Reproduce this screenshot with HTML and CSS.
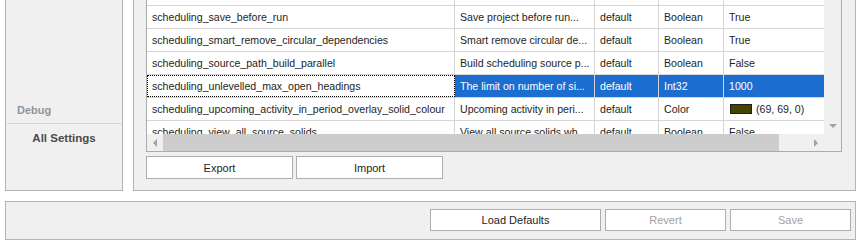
FILE: index.html
```html
<!DOCTYPE html>
<html>
<head>
<meta charset="utf-8">
<link rel="stylesheet" href="styles.css">
</head>
<body>
<div class="window">
  <div class="top">
    <div class="nav">
      <div class="nav-item debug">Debug</div>
      <div class="nav-sep"></div>
      <div class="nav-item active">All Settings</div>
    </div>
    <div class="content">
      <div class="grid">
        <div class="grid-main">
          <div class="rows">
            <div class="row">
              <div class="cell c1"></div>
              <div class="cell c2"></div>
              <div class="cell c3"></div>
              <div class="cell c4"></div>
              <div class="cell c5"></div>
            </div>
            <div class="row">
              <div class="cell c1">scheduling_save_before_run</div>
              <div class="cell c2">Save project before run...</div>
              <div class="cell c3">default</div>
              <div class="cell c4">Boolean</div>
              <div class="cell c5">True</div>
            </div>
            <div class="row">
              <div class="cell c1">scheduling_smart_remove_circular_dependencies</div>
              <div class="cell c2">Smart remove circular de...</div>
              <div class="cell c3">default</div>
              <div class="cell c4">Boolean</div>
              <div class="cell c5">True</div>
            </div>
            <div class="row">
              <div class="cell c1">scheduling_source_path_build_parallel</div>
              <div class="cell c2">Build scheduling source p...</div>
              <div class="cell c3">default</div>
              <div class="cell c4">Boolean</div>
              <div class="cell c5">False</div>
            </div>
            <div class="row selected">
              <div class="cell c1 focus">scheduling_unlevelled_max_open_headings</div>
              <div class="cell c2">The limit on number of si...</div>
              <div class="cell c3">default</div>
              <div class="cell c4">Int32</div>
              <div class="cell c5">1000</div>
            </div>
            <div class="row">
              <div class="cell c1">scheduling_upcoming_activity_in_period_overlay_solid_colour</div>
              <div class="cell c2">Upcoming activity in peri...</div>
              <div class="cell c3">default</div>
              <div class="cell c4">Color</div>
              <div class="cell c5"><span class="swatch" style="background:#454500"></span>(69, 69, 0)</div>
            </div>
            <div class="row">
              <div class="cell c1">scheduling_view_all_source_solids</div>
              <div class="cell c2">View all source solids wh...</div>
              <div class="cell c3">default</div>
              <div class="cell c4">Boolean</div>
              <div class="cell c5">False</div>
            </div>
          </div>
          <div class="vscroll">
            <span class="arrow arrow-down"></span>
          </div>
        </div>
        <div class="hscroll-row">
          <div class="hscroll">
            <div class="sbtn"><span class="arrow arrow-left"></span></div>
            <div class="thumb"></div>
            <div class="track"></div>
            <div class="sbtn"><span class="arrow arrow-right"></span></div>
          </div>
          <div class="corner"></div>
        </div>
      </div>
      <div class="actions">
        <button class="btn wide">Export</button>
        <button class="btn wide">Import</button>
      </div>
    </div>
  </div>
  <div class="footer">
    <button class="btn load">Load Defaults</button>
    <button class="btn small disabled">Revert</button>
    <button class="btn small disabled">Save</button>
  </div>
</div>
</body>
</html>
```

FILE: styles.css
```css
* { box-sizing: border-box; }
html, body { margin: 0; padding: 0; background: #ffffff; }
body {
  font-family: "Liberation Sans", Arial, sans-serif;
  font-size: 11px;
  color: #1e1e1e;
}
.window {
  width: 860px;
  height: 243px;
  overflow: hidden;
  display: flex;
  flex-direction: column;
}
.top {
  display: flex;
  margin-top: -40px;
  height: 231px;
  flex: none;
}
.nav {
  margin-left: 5px;
  width: 118px;
  border: 1px solid #b4b4b4;
  background: #f0f0f0;
  display: flex;
  flex-direction: column;
  justify-content: flex-end;
  padding-bottom: 41px;
}
.nav-item {
  height: 22px;
  line-height: 22px;
  font-weight: bold;
}
.nav-item.debug {
  color: #8f949c;
  padding-left: 11px;
}
.nav-sep {
  height: 1px;
  background: #d6d6d6;
  margin: 2px 0 0 1px;
}
.nav-item.active {
  color: #4b4b4b;
  text-align: center;
  margin-top: 3px;
  font-size: 11.5px;
}
.content {
  margin-left: 10px;
  width: 723px;
  border: 1px solid #b4b4b4;
  background: #f0f0f0;
  padding: 21px 13px 11px 12px;
  display: flex;
  flex-direction: column;
}
.grid {
  width: 696px;
  height: 170px;
  border: 1px solid #acacac;
  background: #ffffff;
  display: flex;
  flex-direction: column;
}
.grid-main {
  display: flex;
  height: 151px;
}
.rows {
  width: 677px;
  overflow: hidden;
}
.row {
  display: flex;
  height: 23px;
  width: 760px;
  border-bottom: 1px solid #d5d5d5;
}
.cell {
  flex: none;
  height: 22px;
  line-height: 22px;
  padding-left: 5px;
  white-space: nowrap;
  overflow: hidden;
  border-right: 1px solid #d5d5d5;
  font-size: 10.6px;
}
.c1 { width: 308px; }
.c2 { width: 140px; }
.c3 { width: 64px; }
.c4 { width: 65px; }
.c5 { width: 183px; display: flex; align-items: center; }
.row.selected .cell {
  background: #1c6dd0;
  color: #ffffff;
}
.row.selected .cell.focus {
  background: #ffffff;
  color: #1e1e1e;
  outline: 1px dotted #000000;
  outline-offset: -1px;
}
.swatch {
  display: inline-block;
  width: 22px;
  height: 10px;
  border: 1px solid #1e1e1e;
  margin-right: 4px;
  margin-left: 1px;
}
.vscroll {
  width: 17px;
  background: #f0f0f0;
  display: flex;
  flex-direction: column;
  justify-content: flex-end;
  align-items: center;
  padding-bottom: 6px;
}
.hscroll-row {
  display: flex;
  height: 17px;
}
.hscroll {
  width: 677px;
  display: flex;
  background: #f0f0f0;
}
.sbtn {
  width: 16px;
  display: flex;
  align-items: center;
  justify-content: center;
}
.thumb {
  width: 616px;
  background: #cdcdcd;
}
.track { flex: 1; }
.corner {
  width: 17px;
  background: #f0f0f0;
}
.arrow {
  display: block;
  width: 0;
  height: 0;
}
.arrow-down {
  border-left: 4px solid transparent;
  border-right: 4px solid transparent;
  border-top: 4px solid #a3a3a3;
}
.arrow-left {
  border-top: 4px solid transparent;
  border-bottom: 4px solid transparent;
  border-right: 4px solid #a3a3a3;
}
.arrow-right {
  border-top: 4px solid transparent;
  border-bottom: 4px solid transparent;
  border-left: 4px solid #a3a3a3;
}
.actions {
  display: flex;
  gap: 3px;
  margin-top: 4px;
}
.btn {
  font-family: "Liberation Sans", Arial, sans-serif;
  font-size: 11px;
  color: #1e1e1e;
  background: #ffffff;
  border: 1px solid #adadad;
  padding: 0;
  margin: 0;
}
.btn.wide { width: 147px; height: 23px; }
.footer {
  margin-top: 10px;
  margin-left: 5px;
  width: 851px;
  height: 39px;
  border: 1px solid #b4b4b4;
  background: #f0f0f0;
  display: flex;
  justify-content: flex-end;
  gap: 4px;
  padding: 7px 4px 0 0;
  flex: none;
}
.btn.load { width: 171px; height: 22px; }
.btn.small { width: 121px; height: 22px; }
.btn.disabled { color: #a2a2a2; }
```
